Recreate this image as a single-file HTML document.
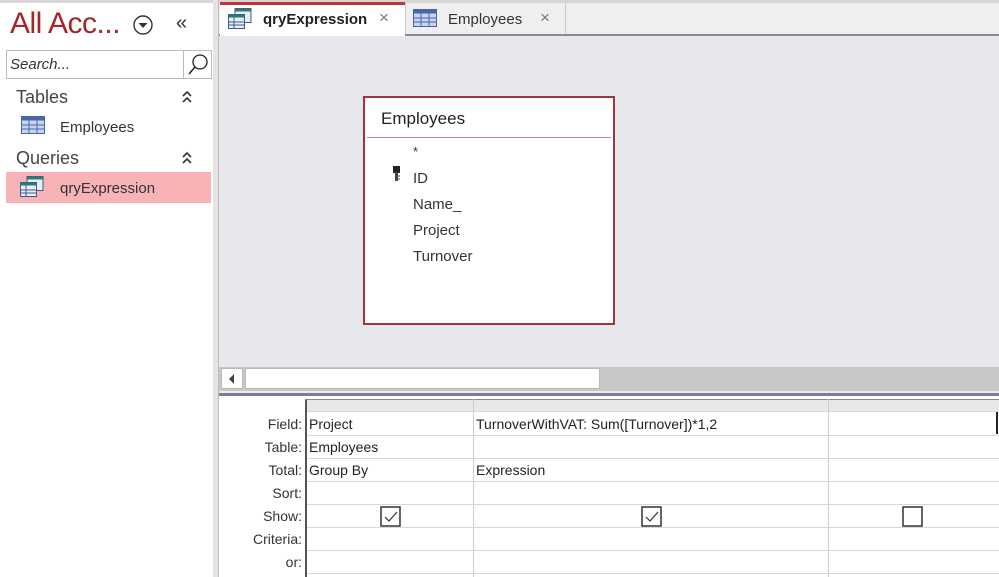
<!DOCTYPE html>
<html><head><style>
*{margin:0;padding:0;box-sizing:border-box}
body{width:999px;height:577px;overflow:hidden;position:relative;background:#fff;font-family:"Liberation Sans",sans-serif;color:#222}
.a{position:absolute}
.t{font-size:15px;color:#333}
</style></head><body>
<div class="a" style="left:0;top:0;width:213px;height:577px;background:#fff"></div>
<div class="a" style="left:0;top:0;width:999px;height:3px;background:#d8d6d4"></div>
<div class="a" style="left:10px;top:7px;font-size:30px;color:#a4262c;letter-spacing:-0.5px">All Acc...</div>
<svg class="a" style="left:132px;top:14px" width="22" height="22"><circle cx="11" cy="11" r="9" fill="none" stroke="#333" stroke-width="1.4"/><path d="M6.5 9h9l-4.5 5z" fill="#333"/></svg>
<div class="a" style="left:176px;top:12px;font-size:20px;color:#333">«</div>
<div class="a" style="left:6px;top:50px;width:206px;height:29px;border:1px solid #bbb"></div>
<div class="a" style="left:183px;top:51px;width:1px;height:27px;background:#bbb"></div>
<div class="a" style="left:10px;top:56px;font-size:15px;font-style:italic;color:#333">Search...</div>
<svg class="a" style="left:186px;top:52px" width="24" height="26"><circle cx="14" cy="10" r="7" fill="none" stroke="#222" stroke-width="1.3"/><path d="M9 15L3 22" stroke="#222" stroke-width="1.5"/></svg>
<div class="a" style="left:16px;top:87px;font-size:18px;color:#444">Tables</div>
<svg class="a" style="left:181px;top:90px" width="12" height="14"><path d="M2 6l4-4 4 4M2 12l4-4 4 4" fill="none" stroke="#333" stroke-width="1.6"/></svg>
<svg class="a" style="left:21px;top:116px" width="24" height="18"><rect x="0.5" y="0.5" width="23" height="17" fill="#c6d4ee" stroke="#4a66a8"/><rect x="0.5" y="0.5" width="23" height="4" fill="#4a66a8"/><path d="M0 9h24M0 13h24M8 4v14M16 4v14" stroke="#4a66a8"/></svg>
<div class="a t" style="left:60px;top:119px">Employees</div>
<div class="a" style="left:16px;top:148px;font-size:18px;color:#444">Queries</div>
<svg class="a" style="left:181px;top:151px" width="12" height="14"><path d="M2 6l4-4 4 4M2 12l4-4 4 4" fill="none" stroke="#333" stroke-width="1.6"/></svg>
<div class="a" style="left:6px;top:172px;width:205px;height:31px;background:#f8b3b7"></div>
<svg class="a" style="left:20px;top:176px" width="24" height="22"><rect x="7" y="0.5" width="16" height="14" fill="#e8eef8" stroke="#3c5a8c"/><rect x="7" y="0.5" width="16" height="3" fill="#2d7a6e"/><rect x="0.5" y="6.5" width="16" height="14" fill="#e8eef8" stroke="#3c5a8c"/><rect x="0.5" y="6.5" width="16" height="3" fill="#2d7a6e"/><path d="M0 14h17M0 17h17M6 9v12" stroke="#3c5a8c"/></svg>
<div class="a t" style="left:60px;top:180px">qryExpression</div>
<div class="a" style="left:213px;top:0;width:6px;height:577px;background:#e4e4e4"></div>
<div class="a" style="left:218px;top:0;width:1px;height:577px;background:#bdbdbd"></div>
<div class="a" style="left:219px;top:3px;width:780px;height:32px;background:#f0efee"></div>
<div class="a" style="left:219px;top:34px;width:780px;height:2px;background:#8a8c90"></div>
<div class="a" style="left:220px;top:2px;width:185px;height:34px;background:#fff"></div>
<div class="a" style="left:220px;top:2px;width:185px;height:3px;background:#c4323b"></div>
<div class="a" style="left:405px;top:3px;width:161px;height:31px;background:#efefef;border-left:1px solid #ccc;border-right:1px solid #ccc"></div>
<svg class="a" style="left:228px;top:8px" width="24" height="22"><rect x="7" y="0.5" width="16" height="14" fill="#e8eef8" stroke="#3c5a8c"/><rect x="7" y="0.5" width="16" height="3" fill="#2d7a6e"/><rect x="0.5" y="6.5" width="16" height="14" fill="#e8eef8" stroke="#3c5a8c"/><rect x="0.5" y="6.5" width="16" height="3" fill="#2d7a6e"/><path d="M0 14h17M0 17h17M6 9v12" stroke="#3c5a8c"/></svg>
<div class="a" style="left:263px;top:11px;font-size:15px;font-weight:bold;color:#222">qryExpression</div>
<div class="a" style="left:379px;top:8px;font-size:17px;color:#777">×</div>
<svg class="a" style="left:413px;top:9px" width="24" height="18"><rect x="0.5" y="0.5" width="23" height="17" fill="#c6d4ee" stroke="#4a66a8"/><rect x="0.5" y="0.5" width="23" height="4" fill="#4a66a8"/><path d="M0 9h24M0 13h24M8 4v14M16 4v14" stroke="#4a66a8"/></svg>
<div class="a t" style="left:448px;top:11px">Employees</div>
<div class="a" style="left:540px;top:8px;font-size:17px;color:#777">×</div>
<div class="a" style="left:219px;top:36px;width:780px;height:331px;background:#e6e8ec"></div>
<div class="a" style="left:363px;top:96px;width:252px;height:229px;background:#fff;border:2px solid #a8323a"></div>
<div class="a" style="left:381px;top:109px;font-size:17px;color:#222">Employees</div>
<div class="a" style="left:367px;top:137px;width:244px;height:1px;background:#cc8a8e"></div>
<div class="a t" style="left:413px;top:144px;font-size:13px">*</div>
<svg class="a" style="left:393px;top:166px" width="8" height="16"><rect x="0" y="0" width="7" height="7" fill="#222"/><rect x="2" y="6" width="3" height="9" fill="#444"/><path d="M5 10h2M5 13h2" stroke="#444"/></svg>
<div class="a t" style="left:413px;top:170px">ID</div>
<div class="a t" style="left:413px;top:196px">Name_</div>
<div class="a t" style="left:413px;top:222px">Project</div>
<div class="a t" style="left:413px;top:248px">Turnover</div>
<div class="a" style="left:219px;top:367px;width:780px;height:24px;background:#c8c8c8"></div>
<div class="a" style="left:221px;top:368px;width:22px;height:21px;background:#fff;border:1px solid #bbb"></div>
<div class="a" style="left:229px;top:374px;width:0;height:0;border-top:5px solid transparent;border-bottom:5px solid transparent;border-right:5px solid #444"></div>
<div class="a" style="left:245px;top:368px;width:355px;height:21px;background:#fff;border:1px solid #bbb"></div>
<div class="a" style="left:219px;top:391px;width:780px;height:2px;background:#ececf0"></div>
<div class="a" style="left:219px;top:393px;width:780px;height:3px;background:#7e7a98"></div>
<div class="a" style="left:219px;top:396px;width:780px;height:181px;background:#fff"></div>
<div class="a" style="left:305px;top:399px;width:694px;height:13px;background:#e8e8e8;border-bottom:1px solid #d4d8e8"></div>
<div class="a" style="left:305px;top:399px;width:2px;height:178px;background:#555"></div>
<div class="a" style="left:305px;top:399px;width:694px;height:1px;background:#888"></div>
<div class="a" style="left:473px;top:399px;width:1px;height:178px;background:#ccd"></div>
<div class="a" style="left:828px;top:399px;width:1px;height:178px;background:#ccd"></div>
<div class="a" style="left:996px;top:412px;width:2px;height:22px;background:#222"></div>
<div class="a" style="left:307px;top:435px;width:692px;height:1px;background:#d4d8e4"></div>
<div class="a" style="left:307px;top:458px;width:692px;height:1px;background:#d4d8e4"></div>
<div class="a" style="left:307px;top:481px;width:692px;height:1px;background:#d4d8e4"></div>
<div class="a" style="left:307px;top:504px;width:692px;height:1px;background:#d4d8e4"></div>
<div class="a" style="left:307px;top:527px;width:692px;height:1px;background:#d4d8e4"></div>
<div class="a" style="left:307px;top:550px;width:692px;height:1px;background:#d4d8e4"></div>
<div class="a" style="left:307px;top:573px;width:692px;height:1px;background:#d4d8e4"></div>
<div style="position:absolute;left:219px;top:413px;width:83px;text-align:right;font-size:14px;line-height:23px;color:#333">Field:<br>Table:<br>Total:<br>Sort:<br>Show:<br>Criteria:<br>or:</div>
<div style="position:absolute;left:309px;top:413px;font-size:14px;line-height:23px;color:#222">Project<br>Employees<br>Group By</div>
<div style="position:absolute;left:476px;top:413px;font-size:14px;line-height:23px;color:#222">TurnoverWithVAT: Sum([Turnover])*1,2<br><br>Expression</div>
<svg class="a" style="left:380px;top:506px" width="22" height="22"><rect x="1" y="1" width="19" height="19" fill="#fff" stroke="#333" stroke-width="1.5"/><path d="M5 11l4 4 8-9" fill="none" stroke="#333" stroke-width="1.2"/></svg>
<svg class="a" style="left:641px;top:506px" width="22" height="22"><rect x="1" y="1" width="19" height="19" fill="#fff" stroke="#333" stroke-width="1.5"/><path d="M5 11l4 4 8-9" fill="none" stroke="#333" stroke-width="1.2"/></svg>
<svg class="a" style="left:902px;top:506px" width="22" height="22"><rect x="1" y="1" width="19" height="19" fill="#fff" stroke="#333" stroke-width="1.5"/></svg>
</body></html>
